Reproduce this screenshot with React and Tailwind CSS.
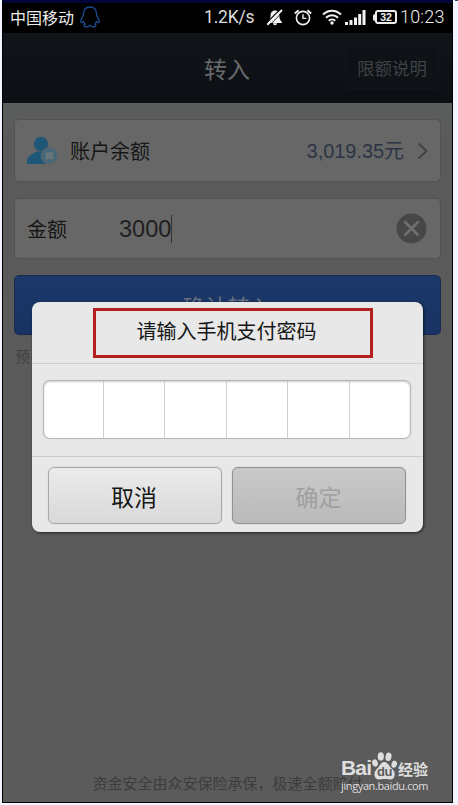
import React, { useState } from 'react';

const FONT = "font-['Noto_Sans_CJK_SC','Liberation_Sans',sans-serif]";
const LATIN = "font-['Liberation_Sans','Noto_Sans_CJK_SC',sans-serif]";

const PenguinIcon = () => (
  <svg className="ml-[5px] h-[22px] w-[20px]" viewBox="0 0 20 22" fill="none" stroke="#1d4a8c" strokeWidth="1.4" strokeLinejoin="round">
    <path d="M10 1C5.8 1 3.6 3.8 3.6 7.2C3.6 9 3 10.4 2 12C.9 14 .6 16 1.4 16.6C2 17 3 15.8 3.6 15.4C3.8 16.6 4.4 17.6 5.2 18.2C3.6 18.8 3.6 20.6 5.6 20.8C7.8 21 9 20.4 9.4 19.4H10.6C11 20.4 12.2 21 14.4 20.8C16.4 20.6 16.4 18.8 14.8 18.2C15.6 17.6 16.2 16.6 16.4 15.4C17 15.8 18 17 18.6 16.6C19.4 16 19.1 14 18 12C17 10.4 16.4 9 16.4 7.2C16.4 3.8 14.2 1 10 1Z" />
  </svg>
);

const MuteIcon = () => (
  <svg className="h-[17px] w-[18px]" viewBox="0 0 18 17">
    <path d="M9 1.5C5.8 1.5 4.6 4 4.6 6.5C4.6 10 3.6 11 1.6 13V14H16V13C14 11 13.4 10 13.4 6.5C13.4 4 12 1.5 9 1.5ZM7 14.3A2 2 0 0 0 11 14.3Z" fill="#f2f2f2" />
    <path d="M.6 14.2L14.4 0" stroke="#000" strokeWidth="1.2" />
    <path d="M1.4 15.8L16 1" stroke="#f2f2f2" strokeWidth="2" />
    <path d="M3 16.8L17.4 2.2" stroke="#000" strokeWidth=".8" />
  </svg>
);

const AlarmIcon = () => (
  <svg className="h-[17px] w-[18px]" viewBox="0 0 18 17" fill="none" stroke="#ededed" strokeWidth="1.6">
    <circle cx="9" cy="9" r="6.6" />
    <path d="M9 5.2V9.4H12.4" strokeWidth="1.4" />
    <path d="M.8 4.4L4.6 1.2M13.4 1.2L17.2 4.4" strokeWidth="1.9" />
  </svg>
);

const WifiIcon = () => (
  <svg className="h-[16px] w-[20px]" viewBox="0 0 20 16" fill="none" stroke="#f2f2f2" strokeWidth="2.1">
    <path d="M1 5.6C6 .4 14 .4 19 5.6" />
    <path d="M4 8.8C7.4 5.4 12.6 5.4 16 8.8" />
    <path d="M6.8 11.8C8.6 10 11.4 10 13.2 11.8" />
    <circle cx="10" cy="14" r="1.7" fill="#f2f2f2" stroke="none" />
  </svg>
);

const SignalIcon = () => (
  <svg className="h-[15px] w-[21px]" viewBox="0 0 21 15" fill="#f2f2f2">
    <rect x="0" y="12" width="3" height="3" />
    <rect x="4.5" y="10" width="3" height="5" />
    <rect x="9" y="7.5" width="3" height="7.5" />
    <rect x="13.2" y="4" width="3" height="11" />
    <rect x="17.5" y="0" width="3" height="15" />
  </svg>
);

const StatusBar = () => (
  <div className="flex h-[30px] items-center bg-black pb-[2px] pl-[7px] text-[#ededed]">
    <span className="w-[65px] text-[16px] leading-[26px]">中国移动</span>
    <PenguinIcon />
    <span className="ml-[104px] w-[50px] font-['Roboto',sans-serif] text-[17.5px] leading-[26px] tracking-[-0.2px] text-[#dcdcdc]">1.2K/s</span>
    <div className="ml-[12px]"><MuteIcon /></div>
    <div className="ml-[10px]"><AlarmIcon /></div>
    <div className="ml-[10px]"><WifiIcon /></div>
    <div className="ml-[3px]"><SignalIcon /></div>
    <div className="ml-[7px] flex items-center">
      <div className="h-[7px] w-[2px] rounded-l-sm bg-[#ededed]" />
      <div className="h-[14px] w-[22px] rounded-[3px] border-2 border-[#ededed] text-center font-['Liberation_Sans',sans-serif] text-[10.5px] font-bold leading-[11px]">32</div>
    </div>
    <span className="ml-[3px] font-['Roboto',sans-serif] text-[18px] font-light leading-[26px] tracking-[0.2px] whitespace-nowrap">10:23</span>
  </div>
);

const UserIcon = () => (
  <svg className="h-[29px] w-[31px]" viewBox="0 0 31 29">
    <circle cx="14" cy="8" r="7.2" fill="#1e5777" />
    <path d="M0 28V25.5C0 20.5 4 18.4 9.6 15.4H17L22 28Z" fill="#1e5777" />
    <circle cx="22.6" cy="19.8" r="8.2" fill="#476879" stroke="#666" strokeWidth="1" />
    <path d="M18.6 16.6Q22.6 15.2 26.6 16.6Q25.8 20 26.6 23.4Q22.6 22.4 18.6 23.4Q19.4 20 18.6 16.6Z" fill="#68757b" />
  </svg>
);

const PayDialog = () => {
  const [digits] = useState(Array(6).fill(''));

  return (
    <div className="absolute left-[32px] top-[302px] flex h-[230px] w-[391px] flex-col rounded-[8px] bg-[#e8e8e8] shadow-[1px_1px_3px_0px_rgba(0,0,0,0.6)]">
      <h2 className="h-[62px] border-b border-[#cfcfcf] pr-[2px] text-center text-[20px] leading-[58px] text-[#161616]">请输入手机支付密码</h2>
      <div className="mx-[11px] mt-[16px] flex h-[59px] w-[368px] overflow-hidden rounded-[7px] border-[1.5px] border-[#b8b8b8] bg-white shadow-[inset_0_1px_2px_rgba(0,0,0,0.2),0_0_1px_#b8b8b8]">
        {digits.map((d, i) => (
          <div key={i} className="flex-1 border-r border-[#cfcfcf] first:flex-none first:basis-[60px] last:border-r-0">{d}</div>
        ))}
      </div>
      <div className="mt-[17px] flex h-[76px] gap-[10px] border-t border-[#cccccc] pl-[16px] pt-[10px]">
        <button className="h-[57px] w-[174px] rounded-[6px] border border-[#a8a8a8] bg-linear-to-b from-[#ebebeb] to-[#d9d9d9] pr-[2px] text-[23px] leading-[54px] text-[#161616] shadow-[0_0_1px_#a8a8a8]">取消</button>
        <button className="h-[57px] w-[174px] rounded-[6px] border border-[#929292] bg-linear-to-b from-[#c9c9c9] to-[#bababa] pr-px text-[23px] leading-[54px] text-[#a0a0a0] shadow-[0_0_1px_#929292]">确定</button>
      </div>
    </div>
  );
};

const Watermark = () => (
  <div className="absolute left-[341px] top-[751px] w-[90px] text-[#dedede]">
    <div className="flex h-[29px] items-end">
      <span className="w-[31px] font-['Liberation_Sans',sans-serif] text-[21px] font-bold leading-[24px] tracking-[-0.8px]">Bai</span>
      <div className="relative h-[28px] w-[25px]">
        <svg className="h-[28px] w-[25px]" viewBox="0 0 25 28" fill="#dedede">
          <ellipse cx="3" cy="11" rx="2.8" ry="3.7" transform="rotate(-15 3 11)" />
          <ellipse cx="8.8" cy="4.4" rx="3.1" ry="4.2" />
          <ellipse cx="16.5" cy="4.8" rx="3" ry="4.2" transform="rotate(12 16.5 4.8)" />
          <ellipse cx="22.2" cy="12.2" rx="2.7" ry="3.6" transform="rotate(15 22.2 12.2)" />
          <path d="M12.3 10C8.6 10 8.2 14 5.2 16.4C1.2 19.6 1.4 27.4 7 27.4C10 27.4 10 27 12.5 27C15 27 15.4 27.4 18.2 27.4C23.8 27.4 24 19.6 19.8 16.4C16.6 14 16 10 12.3 10Z" />
        </svg>
        <span className="absolute left-[5px] top-[13px] font-['Liberation_Sans',sans-serif] text-[13px] font-bold leading-[14px] tracking-[-0.5px] text-[#5b5b5b]">du</span>
      </div>
      <span className="ml-px text-[15px] font-bold leading-[23px] whitespace-nowrap">经验</span>
    </div>
    <div className="font-['Open_Sans',sans-serif] text-[11px] font-medium leading-[12px] tracking-[-0.38px] whitespace-nowrap">jingyan.baidu.com</div>
  </div>
);

const App = () => {
  const [amount] = useState('3000');

  return (
    <div className={`${FONT} relative h-[805px] w-[458px] overflow-hidden bg-[#f2f5ff] pl-[2px]`}>
      <div className="flex h-[803px] w-[451px] flex-col border-x border-b border-black bg-[#5b5b5b]">
        <div className="h-[3px] bg-[#000436]" />
        <StatusBar />

        <header className="flex h-[70px] items-center bg-linear-to-b from-[#11151a] to-[#0c1014] pr-[13px]">
          <h1 className="ml-[201px] w-[48px] text-[23px] leading-[66px] text-[#686a6c]">转入</h1>
          <div className="ml-auto h-[42px] w-[94px] rounded-[3px] border border-[#11161b] bg-[#0e1217] text-center text-[17.5px] leading-[39px] text-[#3e4144]">限额说明</div>
        </header>

        <main className="flex grow flex-col bg-linear-to-b from-[#5c5e5e] via-[#5a5a5a] via-5% to-[#5b5b5b] px-[11px] pt-[16px]">
          <div className="flex h-[63px] w-[427px] items-center rounded-[5px] border border-[#525252] bg-[#676767] pl-[12px] pr-[12px]">
            <UserIcon />
            <span className="ml-[12px] text-[20px] leading-[60px] text-[#161616]">账户余额</span>
            <span className={`${LATIN} ml-auto text-[20px] leading-[60px] tracking-[-0.05px] text-[#2b3444]`}>3,019.35元</span>
            <svg className="ml-[13px] h-[18px] w-[11px]" viewBox="0 0 11 18" fill="none" stroke="#424242" strokeWidth="2">
              <path d="M1.5 1.5L9.5 9L1.5 16.5" />
            </svg>
          </div>

          <div className="mt-[16px] flex h-[61px] w-[427px] items-center rounded-[5px] border border-[#525252] bg-[#676767] pl-[12px] pr-[13px]">
            <span className="w-[92px] text-[20px] leading-[60px] text-[#161616]">金额</span>
            <span className={`${LATIN} text-[23.5px] leading-[60px] text-[#202020]`}>{amount}</span>
            <div className="h-[28px] w-px bg-[#333333]" />
            <svg className="ml-auto h-[31px] w-[31px]" viewBox="0 0 31 31">
              <circle cx="15.5" cy="15.5" r="15" fill="#474747" />
              <path d="M8.5 8.5L22.5 22.5M22.5 8.5L8.5 22.5" stroke="#6e6e6e" strokeWidth="2.8" />
            </svg>
          </div>

          <button className="mt-[16px] h-[60px] w-[427px] rounded-[5px] border border-[#172b50] bg-linear-to-b from-[#1c3868] to-[#183363] text-[22.5px] leading-[61px] text-[#66707f]">确认转入</button>
          <p className="mt-[10px] ml-px text-[15px] leading-[22px] text-[#404040]">预</p>
          <p className="mt-auto mb-[7px] text-center text-[15px] leading-[24px] text-[#3d3d3d]">资金安全由众安保险承保，极速全额赔付</p>
        </main>
      </div>

      <div className="absolute top-0 right-0 h-px w-[3px] bg-[#24466e]" />
      <PayDialog />
      {/* highlight around the dialog title */}
      <div className="absolute left-[93px] top-[308px] h-[50px] w-[280px] border-[3px] border-[#b41f1f]" />
      <Watermark />
    </div>
  );
};

export default App;
